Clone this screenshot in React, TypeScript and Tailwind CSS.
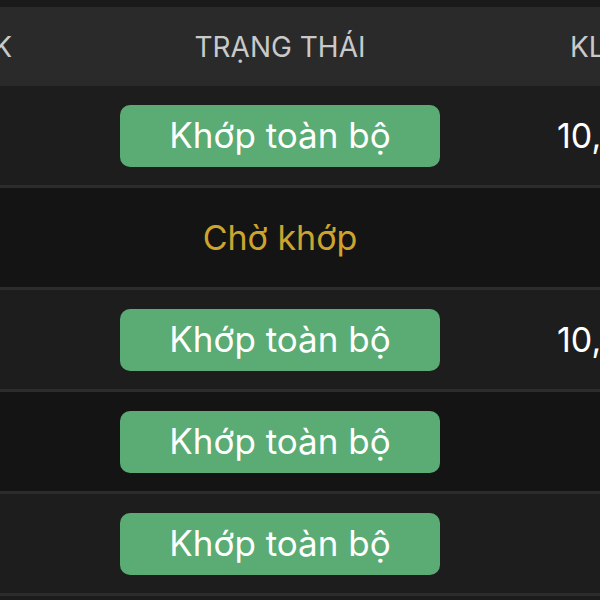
const rows = [
  { status: 'done', qty: '10,000' },
  { status: 'pending', qty: '' },
  { status: 'done', qty: '10,000' },
  { status: 'done', qty: '' },
  { status: 'done', qty: '' },
];

export default function App() {
  return (
    <div
      className="w-[600px] h-[600px] overflow-hidden bg-[#1c1c1c]"
      style={{ fontFamily: 'Inter, "Noto Sans", sans-serif' }}
    >
      {/* top strip */}
      <div className="h-[7px] bg-[#1a1a1a]" />

      {/* header - side columns run past the viewport edges */}
      <div className="flex h-[79px] items-center bg-[#2a2a2a] text-[28px] text-[#c9c9c9]">
        <div className="-ml-[108px] w-[120px] shrink-0 text-right whitespace-nowrap">MÃ CK</div>
        <div className="w-[536px] shrink-0 text-center whitespace-nowrap">TRẠNG THÁI</div>
        <div className="shrink-0 pl-[22px] whitespace-nowrap">KL KHỚP</div>
      </div>

      {/* rows */}
      {rows.map((row, i) => (
        <div
          key={i}
          className={`flex h-[102px] items-center border-b-[3px] border-[#2c2c2c] ${
            i % 2 === 1 ? 'bg-[#141414]' : 'bg-[#1d1d1d]'
          }`}
        >
          <div className="-ml-[108px] w-[120px] shrink-0" />
          <div className="flex w-[536px] shrink-0 justify-center">
            {row.status === 'done' ? (
              <div className="flex h-[62px] w-[320px] items-center justify-center rounded-[10px] bg-[#5aab74] text-[35px] text-white">
                Khớp toàn bộ
              </div>
            ) : (
              <div className="text-[34px] text-[#cca42e]">Chờ khớp</div>
            )}
          </div>
          <div className="shrink-0 pl-[9px] text-[34px] text-white whitespace-nowrap">{row.qty}</div>
        </div>
      ))}
    </div>
  );
}
